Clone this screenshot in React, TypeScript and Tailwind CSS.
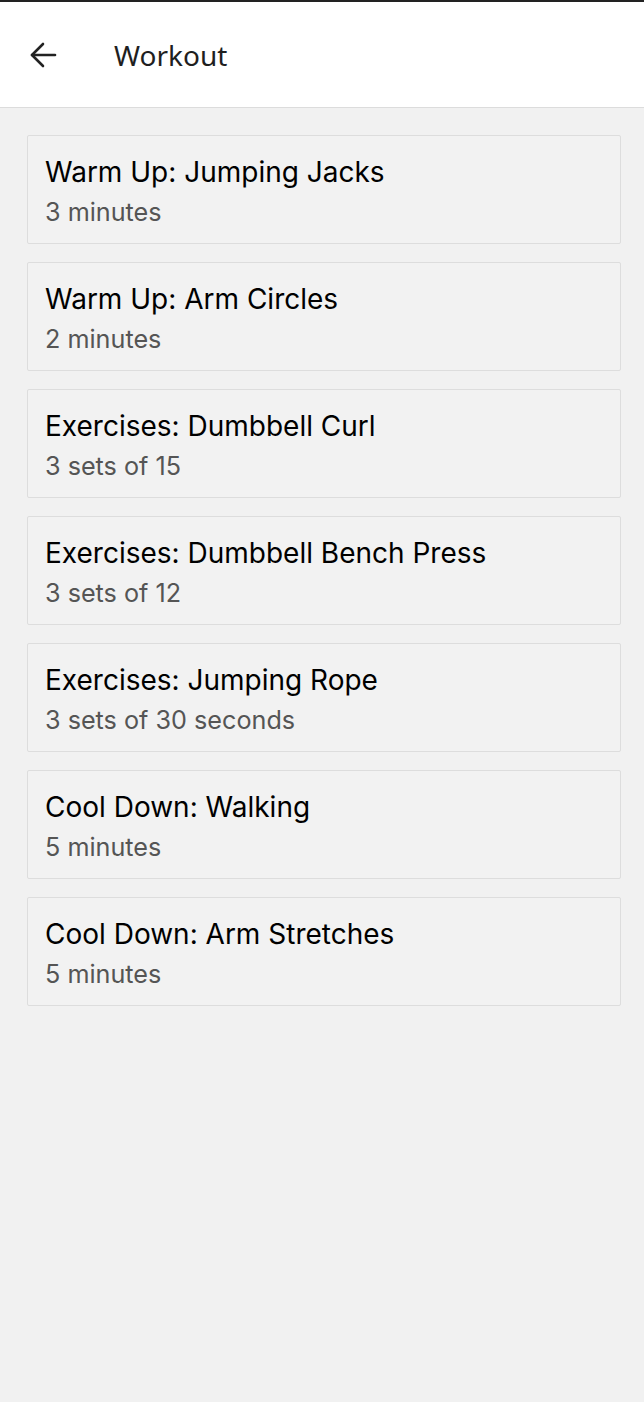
const items = [
  { title: "Warm Up: Jumping Jacks", detail: "3 minutes" },
  { title: "Warm Up: Arm Circles", detail: "2 minutes" },
  { title: "Exercises: Dumbbell Curl", detail: "3 sets of 15" },
  { title: "Exercises: Dumbbell Bench Press", detail: "3 sets of 12" },
  { title: "Exercises: Jumping Rope", detail: "3 sets of 30 seconds" },
  { title: "Cool Down: Walking", detail: "5 minutes" },
  { title: "Cool Down: Arm Stretches", detail: "5 minutes" },
];

export default function App() {
  return (
    <main className="min-h-[1402px] bg-[#f1f1f1] font-['Inter',sans-serif]">
      {/* header */}
      <header className="h-[108px] bg-white border-t-2 border-[#222] border-b border-b-[#dcdcdc] flex items-center">
        <svg
          width="28"
          height="26"
          viewBox="0 0 28 26"
          fill="none"
          stroke="#222"
          strokeWidth="2.6"
          strokeLinecap="round"
          strokeLinejoin="round"
          className="ml-[29px]"
        >
          <path d="M26 13H3" />
          <path d="M14 2 3 13l11 11" />
        </svg>
        <h1 className="ml-[57px] text-[28px] text-[#1f1f1f] font-['Noto_Sans',sans-serif]">Workout</h1>
      </header>

      <div className="pl-[27px] pr-[23px] pt-[27px] flex flex-col gap-[18px]">
        {items.map((item) => (
          <div
            key={item.title}
            className="h-[109px] bg-[#f2f2f2] border border-[#dddddd] rounded-[2px] px-[17px] pt-[18px]"
          >
            <div className="text-[28px] leading-[36px] text-black">{item.title}</div>
            <div className="text-[25.2px] leading-[32px] mt-[6px] text-[#555]">{item.detail}</div>
          </div>
        ))}
      </div>
    </main>
  );
}
